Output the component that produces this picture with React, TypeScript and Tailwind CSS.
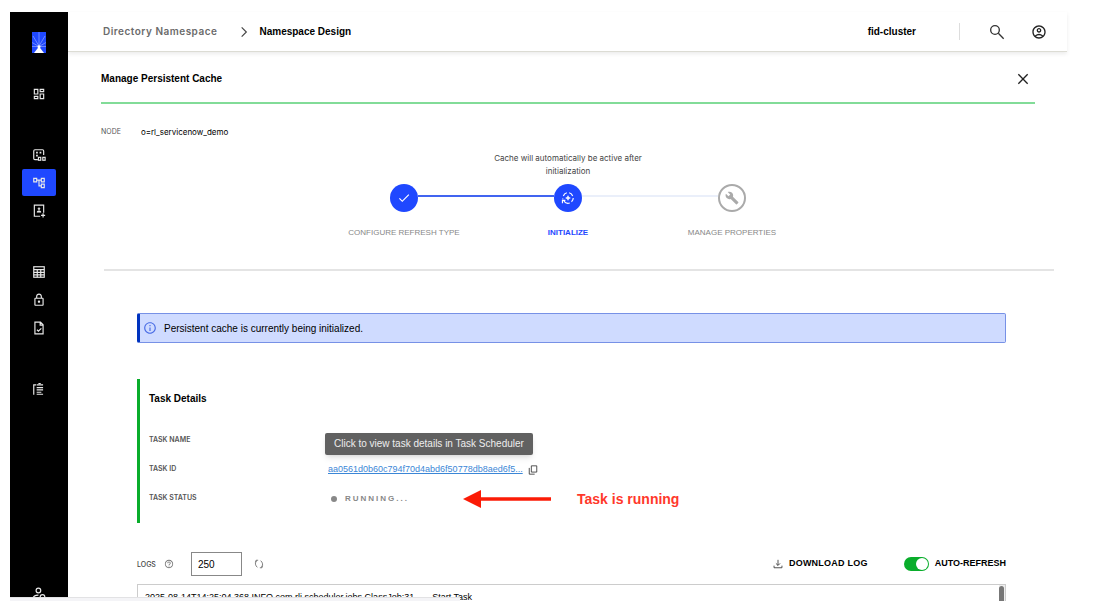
import { useState, type ReactNode } from "react";
import {
  MdOutlineDashboard,
  MdOutlineAccountTree,
  MdOutlineLock,
  MdOutlineAccountCircle,
  MdBuild,
  MdCheck,
  MdInfoOutline,
  MdHelpOutline,
} from "react-icons/md";

function Glyph({ children, className = "size-3.5" }: { children: ReactNode; className?: string }) {
  return (
    <svg viewBox="0 0 24 24" fill="none" stroke="currentColor" strokeWidth="2" className={className} aria-hidden="true">
      {children}
    </svg>
  );
}

function Logo() {
  return (
    <svg viewBox="0 0 14 21" className="h-[21px] w-3.5" aria-hidden="true">
      <rect width="14" height="21" fill="#1f48ff" />
      <g stroke="#c4cfff" strokeWidth="0.6" strokeOpacity="0.8">
        <path d="M7 0v14M1 4l6 10M13 4l-6 10M0 10.500l7 4M14 10.500l-7 4M0 14.500h14" />
      </g>
      <path d="M7 14.500l5 6.500H2z" fill="#fff" />
      <circle cx="7" cy="14.800" r="1.500" fill="#fff" />
    </svg>
  );
}

const icons = {
  namespaces: (
    <Glyph>
      <path d="M10 20H5a2 2 0 0 1-2-2V5a2 2 0 0 1 2-2h13a2 2 0 0 1 2 2v7" />
      <path d="M7 8h3M13 8h3M7 13h3" strokeWidth="3" />
      <rect x="11" y="16" width="4" height="5" />
      <rect x="18.500" y="16" width="4" height="5" />
    </Glyph>
  ),
  contact: (
    <Glyph>
      <path d="M14 21H4V2h16v13" />
      <circle cx="12" cy="8" r="1.600" fill="currentColor" strokeWidth="1" />
      <path d="M8.500 14c0-3 7-3 7 0z" fill="currentColor" strokeWidth="1" />
      <path d="M19 16v7M15.500 19.500h7" />
    </Glyph>
  ),
  table: (
    <Glyph>
      <rect x="3" y="3" width="18" height="18" />
      <path d="M3 8h18M3 12.500h18M3 17h18M9 8v13M15 8v13" />
    </Glyph>
  ),
  fileCheck: (
    <Glyph>
      <path d="M14.500 2H5v20h14V6.500zM14 2v5h5" />
      <path d="M8.500 15l2.500 2.500 5-5" />
    </Glyph>
  ),
  clipboard: (
    <Glyph>
      <path d="M3 22V5h4M8 5h11M11 2.500h4M8 9.500h11M8 13.500h11M8 17.500h8M8 21h11" />
    </Glyph>
  ),
  admin: (
    <Glyph>
      <circle cx="11" cy="6" r="4" />
      <path d="M2 20c0-5 4-6 9-6" />
      <circle cx="18" cy="17" r="4" />
    </Glyph>
  ),
};

function NavItem({ label, active = false, children }: { label: string; active?: boolean; children: ReactNode }) {
  return (
    <a
      href="#"
      aria-label={label}
      aria-current={active ? "page" : undefined}
      className={`flex h-[27px] w-[34px] items-center justify-center rounded-xs text-[#e8e8e8] ${active ? "bg-[#1f48ff]" : ""}`}
    >
      {children}
    </a>
  );
}

function Sidebar() {
  return (
    <nav aria-label="Main" className="flex w-[58px] shrink-0 flex-col items-center overflow-hidden bg-black pt-5">
      <Logo />
      <div className="mt-[27px] flex flex-col gap-[34px]">
        <NavItem label="Dashboard"><MdOutlineDashboard className="size-3.5" /></NavItem>
        <div className="flex flex-col gap-px">
          <NavItem label="Namespaces">{icons.namespaces}</NavItem>
          <NavItem label="Namespace Design" active><MdOutlineAccountTree className="size-3.5" /></NavItem>
          <NavItem label="Contacts">{icons.contact}</NavItem>
        </div>
        <div className="flex flex-col gap-px">
          <NavItem label="Tables">{icons.table}</NavItem>
          <NavItem label="Security"><MdOutlineLock className="size-3.5" /></NavItem>
          <NavItem label="Reports">{icons.fileCheck}</NavItem>
        </div>
        <NavItem label="Tasks">{icons.clipboard}</NavItem>
      </div>
      <div className="mt-auto -mb-1.5">
        <NavItem label="Administration">{icons.admin}</NavItem>
      </div>
    </nav>
  );
}

function TopBar() {
  return (
    <header className="flex h-10 shrink-0 items-center border-b border-[#dcdcd4] pr-5 pl-[35px] shadow-[0_2px_4px_rgba(0,0,0,0.08)]">
      <nav aria-label="Breadcrumb" className="flex items-center text-[10px]">
        <a href="#" className="font-['Inter',sans-serif] font-semibold tracking-wider text-[#6b6b6b]">Directory Namespace</a>
        <Glyph className="mr-2 ml-5 size-3.5 text-[#444]"><path d="M8 4l8 8-8 8" /></Glyph>
        <span className="font-bold text-black">Namespace Design</span>
      </nav>
      <span className="mr-[43px] ml-auto text-[10px] font-bold">fid-cluster</span>
      <div className="h-[17px] w-px bg-[#ddd]" />
      <button type="button" aria-label="Search" className="ml-[29px] text-[#333]">
        <Glyph className="size-4"><circle cx="9" cy="9" r="6.500" /><path d="M14 14l8 8" /></Glyph>
      </button>
      <button type="button" aria-label="Account" className="ml-[26px] text-[#222]"><MdOutlineAccountCircle className="size-4" /></button>
    </header>
  );
}

function Stepper() {
  return (
    <ol className="mx-auto grid w-[492px] grid-cols-3 text-center text-[8px] leading-[13px] text-[#888]">
      <li className="flex flex-col items-center">
        <div className="flex w-full items-center">
          <span className="flex-1" />
          <span className="flex size-7 items-center justify-center rounded-full bg-[#1f48ff] text-white"><MdCheck className="size-3.5" /></span>
          <span className="mb-1 h-0.5 flex-1 bg-[#4164f0]" />
        </div>
        <span className="mt-3.5">CONFIGURE REFRESH TYPE</span>
      </li>
      <li className="flex flex-col items-center">
        <div className="flex w-full items-center">
          <span className="mb-1 h-0.5 flex-1 bg-[#4164f0]" />
          <span className="flex size-7 items-center justify-center rounded-full bg-[#1f48ff] text-white">
            <Glyph>
              <path d="M4 8.500A9 9 0 0 1 10 3M14 3a9 9 0 0 1 6 5.500M21 12a9 9 0 0 1-3 6.500M15 20.500a9 9 0 0 1-10-3M3 14v-1M2.500 21v-5h5" />
              <path d="M12 8l1.200 2.800L16 12l-2.800 1.200L12 16l-1.200-2.800L8 12l2.800-1.200z" fill="currentColor" strokeWidth="1" />
            </Glyph>
          </span>
          <span className="mb-1 h-0.5 flex-1 bg-[#eaeffa]" />
        </div>
        <span className="mt-3.5 font-bold text-[#1f48ff]">INITIALIZE</span>
      </li>
      <li className="flex flex-col items-center">
        <div className="flex w-full items-center">
          <span className="mb-1 h-0.5 flex-1 bg-[#eaeffa]" />
          <span className="flex size-7 items-center justify-center rounded-full border-2 border-[#aaa] text-[#aaa]"><MdBuild className="size-3.5" /></span>
          <span className="flex-1" />
        </div>
        <span className="mt-3.5">MANAGE PROPERTIES</span>
      </li>
    </ol>
  );
}

function TaskDetails() {
  return (
    <section className="mt-9 border-l-3 border-[#09ad2b] pt-3 pb-2.5 pl-[9px]">
      <h2 className="text-[10px] leading-4 font-bold">Task Details</h2>
      <dl className="mt-[19px] grid grid-cols-[179px_1fr] text-[7px]">
        <dt className="flex h-[29px] items-center font-['Inter',sans-serif] font-semibold text-[#555]">TASK NAME</dt>
        <dd />
        <dt className="flex h-[29px] items-center font-['Inter',sans-serif] font-semibold text-[#555]">TASK ID</dt>
        <dd className="relative flex h-[29px] items-center gap-[5px] text-[9px]">
          <a href="#" aria-describedby="task-tip" className="text-[#3b86d6] underline">aa0561d0b60c794f70d4abd6f50778db8aed6f5...</a>
          <button type="button" aria-label="Copy task ID" className="text-[#333]">
            <Glyph className="size-2.5"><path d="M8 2h13v15H8zM16 22H3V7" /></Glyph>
          </button>
          <span id="task-tip" role="tooltip" className="absolute bottom-full -left-[3px] rounded-xs bg-[#616161] px-[9px] py-[3px] text-[10px] leading-4 whitespace-nowrap text-[#eee] shadow-md">
            Click to view task details in Task Scheduler
          </span>
        </dd>
        <dt className="flex h-[29px] items-center font-['Inter',sans-serif] font-semibold text-[#555]">TASK STATUS</dt>
        <dd className="flex h-[29px] items-center pl-[3px] text-[8px]">
          <span className="size-1.5 rounded-full bg-[#888]" />
          <span className="ml-2 w-[118px] font-bold tracking-[2px] text-[#888]">RUNNING...</span>
          <svg viewBox="0 0 88 18" className="h-[18px] w-[88px]" aria-hidden="true">
            <path d="M0 9L18 0v18z" fill="#fb1b06" />
            <path d="M17 9h71" stroke="#fb1b06" strokeWidth="3.500" />
          </svg>
          <strong className="ml-[26px] text-sm text-[#ff382b]">Task is running</strong>
        </dd>
      </dl>
    </section>
  );
}

function Logs() {
  const [size, setSize] = useState("250");
  const [auto, setAuto] = useState(true);
  return (
    <section className="mt-[29px] flex min-h-0 flex-1 flex-col">
      <div className="flex h-6 shrink-0 items-center">
        <label htmlFor="log-size" className="pt-0.5 font-['Inter',sans-serif] text-[7px] font-medium text-[#444]">LOGS</label>
        <button type="button" aria-label="About logs" className="ml-2 text-[#777]"><MdHelpOutline className="size-2.5" /></button>
        <input
          id="log-size"
          value={size}
          onChange={(e) => setSize(e.target.value)}
          className="ml-[17px] h-6 w-[51px] border border-[#888] px-1.5 text-[10px] text-black outline-none"
        />
        <button type="button" aria-label="Refresh logs" className="ml-3 text-[#666]">
          <Glyph className="size-2.5"><path d="M10 3H5v5M5 4c-3 5-2 12 3 16M14 21h5v-5M19 20c3-5 2-12-3-16" /></Glyph>
        </button>
        <button type="button" className="ml-auto flex items-center gap-1.5 text-[9px] font-bold tracking-wide">
          <Glyph className="size-2.5 text-[#333]"><path d="M12 2v13M7 10.500l5 5 5-5M2.500 16v5h19v-5" /></Glyph>
          DOWNLOAD LOG
        </button>
        <label className="ml-9 flex items-center gap-1.5 text-[9px] font-bold">
          <input type="checkbox" checked={auto} onChange={(e) => setAuto(e.target.checked)} className="peer sr-only" />
          <span className="flex h-3.5 w-[25px] items-center rounded-full bg-[#bbb] p-px peer-checked:justify-end peer-checked:bg-[#09ad2b]">
            <span className="size-3 rounded-full bg-white" />
          </span>
          AUTO-REFRESH
        </label>
      </div>
      <div className="mt-2 flex min-h-0 flex-1 overflow-hidden border border-b-0 border-[#ccc] pl-[7px]">
        <pre className="flex-1 pt-1 font-[inherit] text-[9px] leading-4">2025-08-14T14:25:04,368 INFO com.rli.scheduler.jobs.ClassJob:31     - Start Task</pre>
        <div className="w-1.5 bg-[#eee]"><div className="mt-px h-10 w-[5px] rounded-full bg-[#777]" /></div>
      </div>
    </section>
  );
}

export default function App() {
  return (
    <div className="relative flex h-screen overflow-hidden bg-white pt-3 pr-[33px] pl-2.5 font-['Liberation_Sans',sans-serif] text-black">
      <Sidebar />
      <div className="flex min-w-0 flex-1 flex-col">
        <TopBar />
        <main className="flex min-h-0 flex-1 flex-col pl-[33px]">
          <div className="mr-8 flex h-[52px] shrink-0 items-center justify-between border-b-2 border-[#82dc98] pt-[3px] pr-1">
            <h1 className="text-[10px] font-bold">Manage Persistent Cache</h1>
            <button type="button" aria-label="Close" className="text-[#222]">
              <Glyph className="size-4"><path d="M5 5l14 14M19 5L5 19" /></Glyph>
            </button>
          </div>
          <dl className="mt-5 flex items-center gap-5 font-['Inter',sans-serif] text-[7px] leading-4">
            <dt className="text-[#555]">NODE</dt>
            <dd className="text-[8px]">o=rl_servicenow_demo</dd>
          </dl>
          <div className="mr-[13px] ml-[3px] border-b-2 border-[#e4e4e4] pb-[30px]">
            <div className="mr-[22px]">
              <p className="mx-auto mt-3 mb-1.5 w-40 text-center font-['Inter',sans-serif] text-[8px] leading-[13px] text-[#444]">
                Cache will automatically be active after initialization
              </p>
              <Stepper />
            </div>
          </div>
          <div className="mt-[42px] mr-[61px] ml-9 flex min-h-0 flex-1 flex-col">
            <div role="status" className="flex h-[30px] shrink-0 items-center gap-[7px] rounded-xs border border-l-3 border-[#7791e6] border-l-[#0033bf] bg-[#cfdbff] pl-[3px] text-[10px]">
              <MdInfoOutline className="size-3.5 text-[#4a6de5]" />
              Persistent cache is currently being initialized.
            </div>
            <TaskDetails />
            <Logs />
          </div>
        </main>
      </div>
      <div className="absolute bottom-0 left-2.5 h-1 w-[450px] border-t border-[#e2e2e4] bg-[#f4f4f7]" />
    </div>
  );
}
